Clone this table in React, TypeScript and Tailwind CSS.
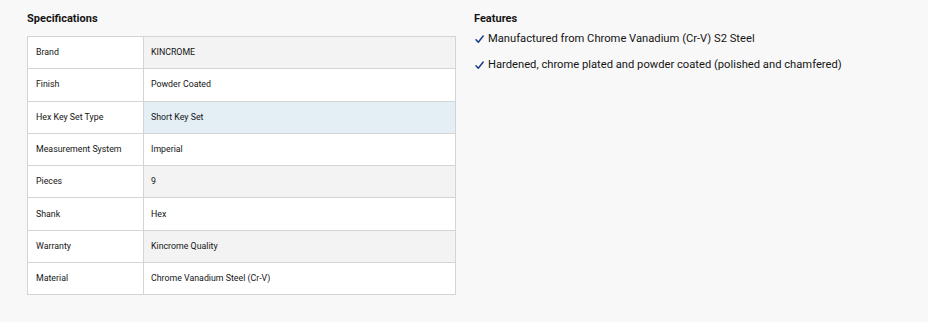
import React from 'react'

const specs: { label: string; value: string; tone: 'grey' | 'white' | 'blue' }[] = [
  { label: 'Brand', value: 'KINCROME', tone: 'grey' },
  { label: 'Finish', value: 'Powder Coated', tone: 'white' },
  { label: 'Hex Key Set Type', value: 'Short Key Set', tone: 'blue' },
  { label: 'Measurement System', value: 'Imperial', tone: 'white' },
  { label: 'Pieces', value: '9', tone: 'grey' },
  { label: 'Shank', value: 'Hex', tone: 'white' },
  { label: 'Warranty', value: 'Kincrome Quality', tone: 'grey' },
  { label: 'Material', value: 'Chrome Vanadium Steel (Cr-V)', tone: 'white' },
]

const features = [
  'Manufactured from Chrome Vanadium (Cr-V) S2 Steel',
  'Hardened, chrome plated and powder coated (polished and chamfered)',
]

const toneClass = {
  grey: 'bg-[#f3f3f3]',
  white: 'bg-white',
  blue: 'bg-[#e3eef5]',
}

function Tick() {
  return (
    <svg width="9" height="9" viewBox="0 0 9 9" className="shrink-0">
      <path d="M1 4.8 L3.3 7.3 L8.2 1" fill="none" stroke="#1c3f80" strokeWidth="1.5" strokeLinecap="round" strokeLinejoin="round" />
    </svg>
  )
}

export default function App() {
  return (
    <div className="min-h-[322px] bg-[#f8f8f8] text-[#151515] font-['Roboto','Liberation_Sans',sans-serif]">
      <div className="flex gap-[18px] pl-[27px] pt-[12px]">
        {/* Specifications table */}
        <div className="w-[429px]">
          <h3 className="text-[11px] font-bold leading-[14px] h-[24px]">Specifications</h3>
          <table className="w-full border-collapse text-[8.8px]">
            <tbody>
              {specs.map((s) => (
                <tr key={s.label} className="h-[32.3px]">
                  <td className="w-[116px] border border-[#d4d4d4] bg-white px-[8px] align-middle">{s.label}</td>
                  <td className={`border border-[#d4d4d4] px-[7px] align-middle ${toneClass[s.tone]}`}>{s.value}</td>
                </tr>
              ))}
            </tbody>
          </table>
        </div>

        {/* Features list */}
        <div>
          <h3 className="text-[11px] font-bold leading-[14px]">Features</h3>
          <ul className="mt-[6px] flex flex-col gap-[12px] text-[11.2px] leading-[14px]">
            {features.map((f) => (
              <li key={f} className="flex items-center gap-[4px] pl-[1px]">
                <Tick />
                <span>{f}</span>
              </li>
            ))}
          </ul>
        </div>
      </div>
    </div>
  )
}
